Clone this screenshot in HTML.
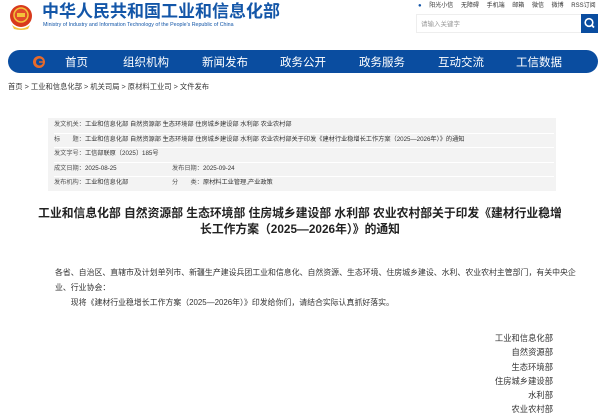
<html><head><style>
body{margin:0;width:600px;height:412px;overflow:hidden;background:#fff;font-family:"Liberation Sans","Noto Sans CJK SC",sans-serif;position:relative}
.a{position:absolute;white-space:nowrap}
.nav{position:absolute;left:8px;top:50px;width:590px;height:23px;background:#0a4da0;border-radius:12px}
.nav span{position:absolute;top:4px;color:#fff;font-size:11.5px}
.tb{position:absolute;left:48px;top:118px;width:508px;height:73px;background:#f3f3f3}
.tb div{position:absolute;left:6px;font-size:6.2px;color:#555;height:14.6px;line-height:14.6px;width:500px;border-bottom:1px solid #fff}
.tb b{font-weight:normal;color:#333}
.p{font-size:7.9px;color:#333}
.s{font-size:8.3px;color:#333;right:47px}
</style></head><body>
<svg class="a" style="left:7px;top:3px" width="28" height="28" viewBox="0 0 28 28"><circle cx="14" cy="13" r="11" fill="#d83a1c"/><circle cx="14" cy="12" r="7" fill="#e24a2a" stroke="#f3c33a" stroke-width="1.5"/><path d="M5 22 Q14 29 23 22 L21 26 Q14 28 7 26Z" fill="#f3c33a"/><rect x="10" y="10" width="8" height="4" fill="#f3c33a"/></svg>
<div class="a" style="left:42px;top:2px;font-size:17px;line-height:20px;font-weight:bold;color:#1356a8">中华人民共和国工业和信息化部</div>
<div class="a" style="left:43px;top:22px;font-size:5.3px;color:#1356a8">Ministry of Industry and Information Technology of the People's Republic of China</div>
<div class="a" style="left:418px;top:0px;font-size:6px;color:#333;word-spacing:6px"><span style="color:#1356a8">●</span> 阳光小信 无障碍 手机端 邮箱 微信 微博 RSS订阅</div>
<div class="a" style="left:416px;top:14px;width:166px;height:19px;border:1px solid #eee;box-sizing:border-box;font-size:6.5px;color:#999;line-height:19px;padding-left:4px">请输入关键字</div>
<div class="a" style="left:581px;top:14px;width:17px;height:19px;background:#0a4da0"><svg width="17" height="19"><circle cx="8" cy="8.5" r="3.8" stroke="#fff" stroke-width="1.6" fill="none"/><path d="M10.8 11.3L13 13.5" stroke="#fff" stroke-width="1.8"/></svg></div>
<div class="nav">
<svg style="position:absolute;left:24px;top:5px" width="14" height="14"><circle cx="7" cy="7" r="6" fill="#e86a2a"/><circle cx="7.5" cy="7" r="3.5" fill="#0a4da0"/><rect x="7" y="6.3" width="4" height="1.4" fill="#e86a2a"/></svg>
<span style="left:57px">首页</span><span style="left:115px">组织机构</span><span style="left:194px">新闻发布</span><span style="left:272px">政务公开</span><span style="left:351px">政务服务</span><span style="left:430px">互动交流</span><span style="left:508px">工信数据</span></div>
<div class="a" style="left:8px;top:82px;font-size:7.3px;color:#333">首页 &gt; 工业和信息化部 &gt; 机关司局 &gt; 原材料工业司 &gt; 文件发布</div>
<div class="tb">
<div style="top:0">发文机关：<b>工业和信息化部 自然资源部 生态环境部 住房城乡建设部 水利部 农业农村部</b></div>
<div style="top:14.6px">标　　题：<b>工业和信息化部 自然资源部 生态环境部 住房城乡建设部 水利部 农业农村部关于印发《建材行业稳增长工作方案（2025—2026年）》的通知</b></div>
<div style="top:29.2px">发文字号：<b>工信部联原〔2025〕185号</b></div>
<div style="top:43.8px">成文日期：<b>2025-08-25</b><span style="position:absolute;left:118px">发布日期：<b>2025-09-24</b></span></div>
<div style="top:58.4px;border:0">发布机构：<b>工业和信息化部</b><span style="position:absolute;left:118px">分　　类：<b>原材料工业管理,产业政策</b></span></div>
</div>
<div class="a" style="left:0;width:600px;top:205px;text-align:center;font-size:11.8px;font-weight:bold;color:#222;line-height:16px">工业和信息化部 自然资源部 生态环境部 住房城乡建设部 水利部 农业农村部关于印发《建材行业稳增<br>长工作方案（2025—2026年）》的通知</div>
<div class="a p" style="left:55px;top:265px;line-height:15px">各省、自治区、直辖市及计划单列市、新疆生产建设兵团工业和信息化、自然资源、生态环境、住房城乡建设、水利、农业农村主管部门，有关中央企<br>业、行业协会：<br>　　现将《建材行业稳增长工作方案（2025—2026年）》印发给你们，请结合实际认真抓好落实。</div>
<div class="a s" style="top:332px">工业和信息化部</div>
<div class="a s" style="top:346px">自然资源部</div>
<div class="a s" style="top:361px">生态环境部</div>
<div class="a s" style="top:375px">住房城乡建设部</div>
<div class="a s" style="top:389px">水利部</div>
<div class="a s" style="top:403px">农业农村部</div>
</body></html>
